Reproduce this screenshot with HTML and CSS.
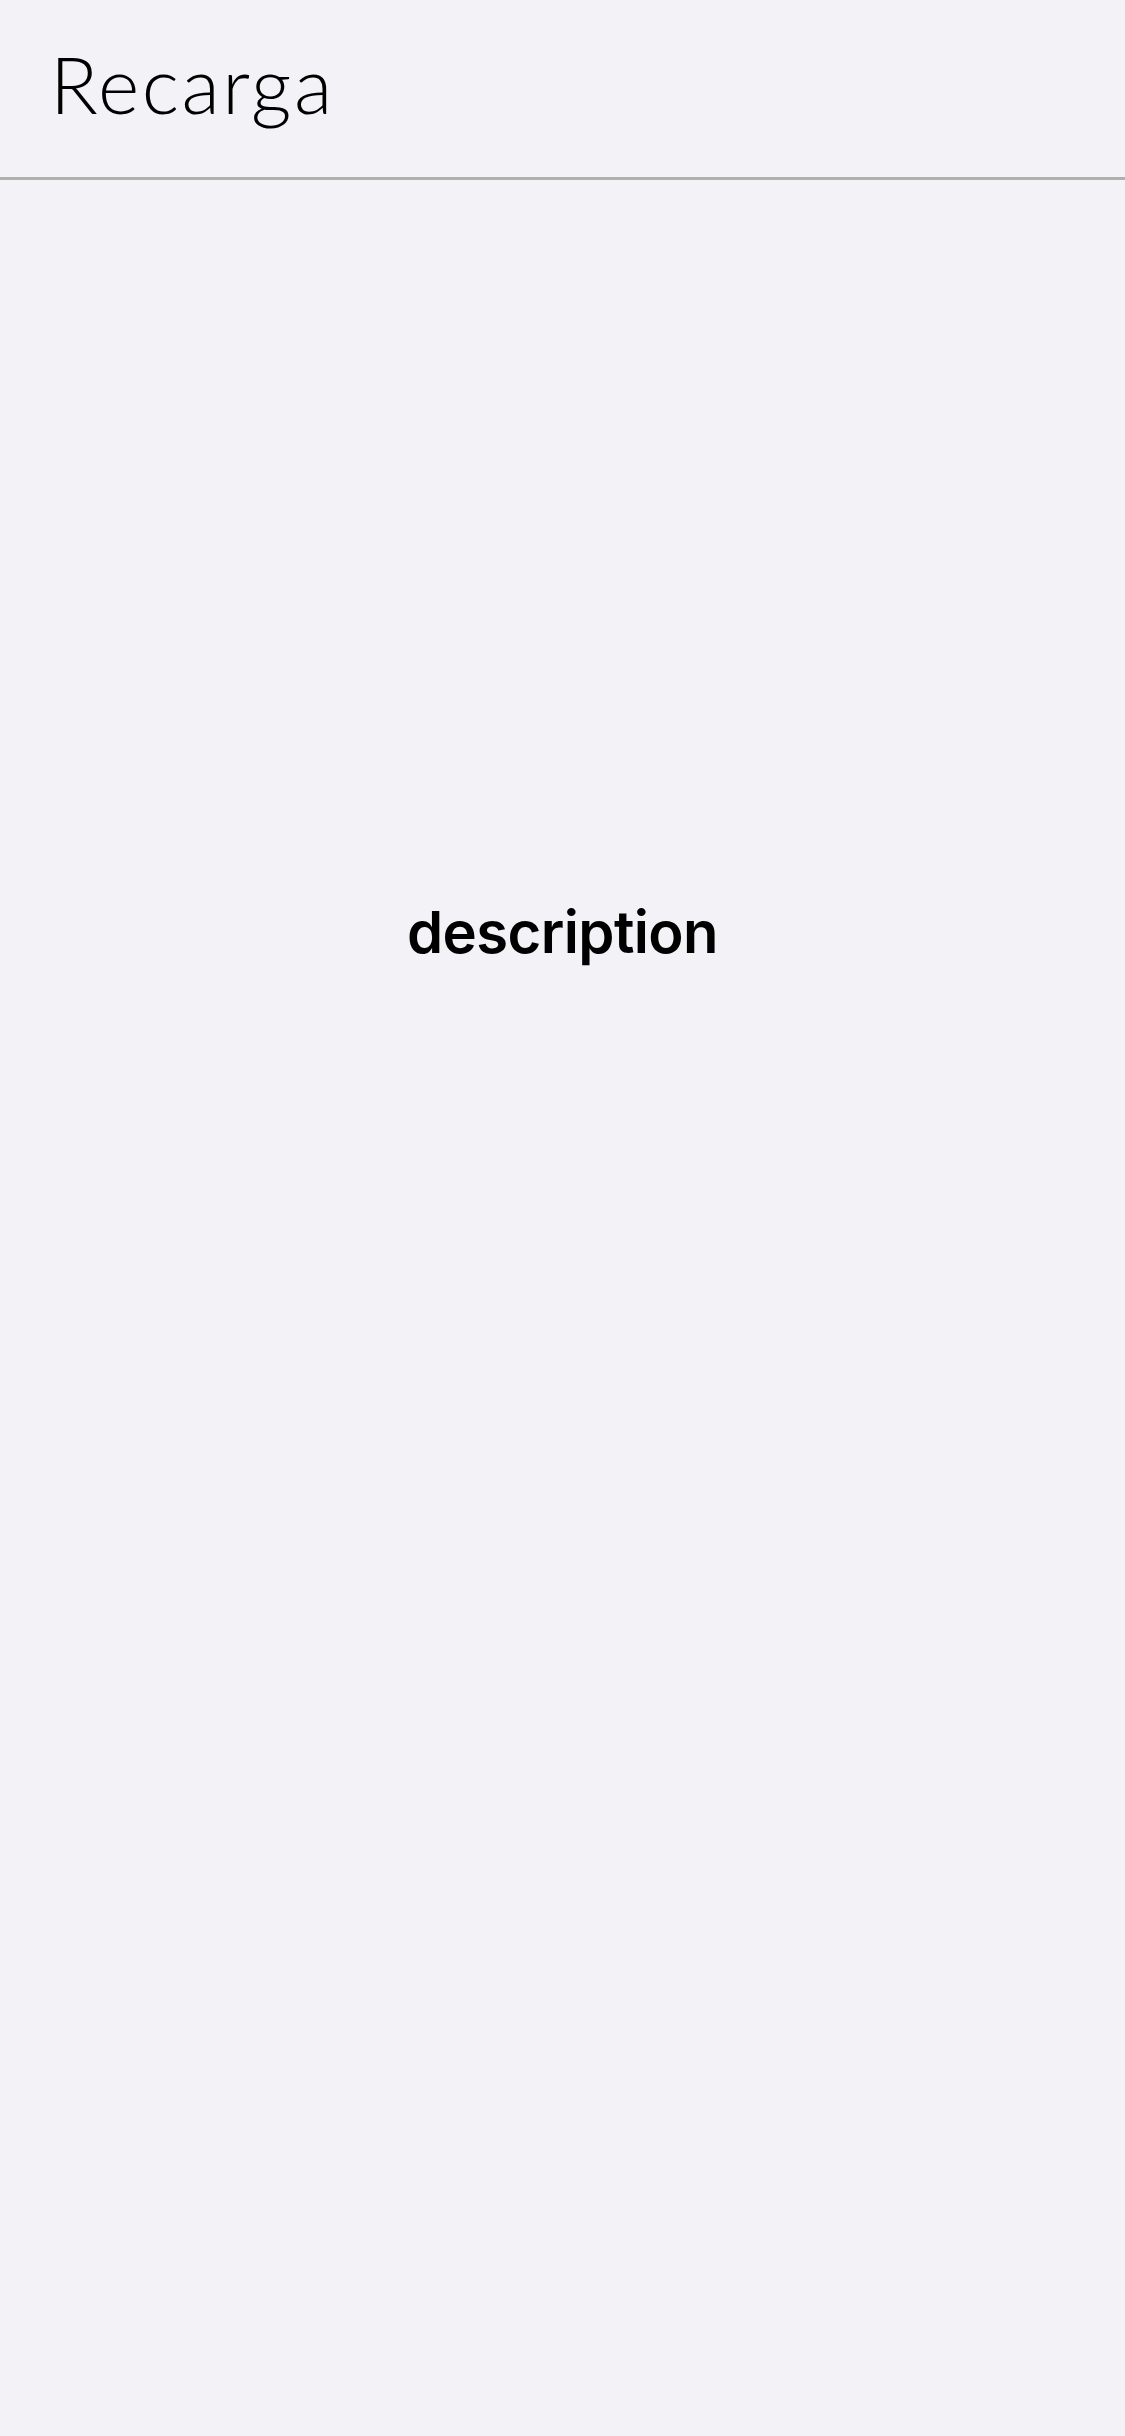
FILE: index.html
```html
<!DOCTYPE html>
<html lang="es">
<head>
<meta charset="utf-8">
<title>Recarga</title>
<link rel="stylesheet" href="styles.css">
</head>
<body>
<header class="header">
  <h1 class="title">Recarga</h1>
</header>
<main class="content">
  <p class="description">description</p>
</main>
</body>
</html>
```
FILE: styles.css
```css
html, body {
  margin: 0;
  padding: 0;
  background: #f2f2f7;
  width: 1125px;
  height: 2436px;
}
.header {
  height: 177px;
  border-bottom: 3px solid #b0b0b0;
  box-sizing: content-box;
  display: flex;
  align-items: flex-start;
  padding-left: 50px;
}
.title {
  margin: 0;
  margin-top: 36px;
  font-family: "Lato", "Open Sans", sans-serif;
  font-weight: 300;
  font-size: 79px;
  line-height: 96px;
  color: #000;
  letter-spacing: 2.5px;
}
.content {
  display: flex;
  justify-content: center;
  padding-top: 712px;
}
.description {
  margin: 0;
  font-family: "Inter", "Roboto", sans-serif;
  font-weight: 600;
  font-size: 58px;
  line-height: 80px;
  color: #000;
  letter-spacing: -0.6px;
}
```
